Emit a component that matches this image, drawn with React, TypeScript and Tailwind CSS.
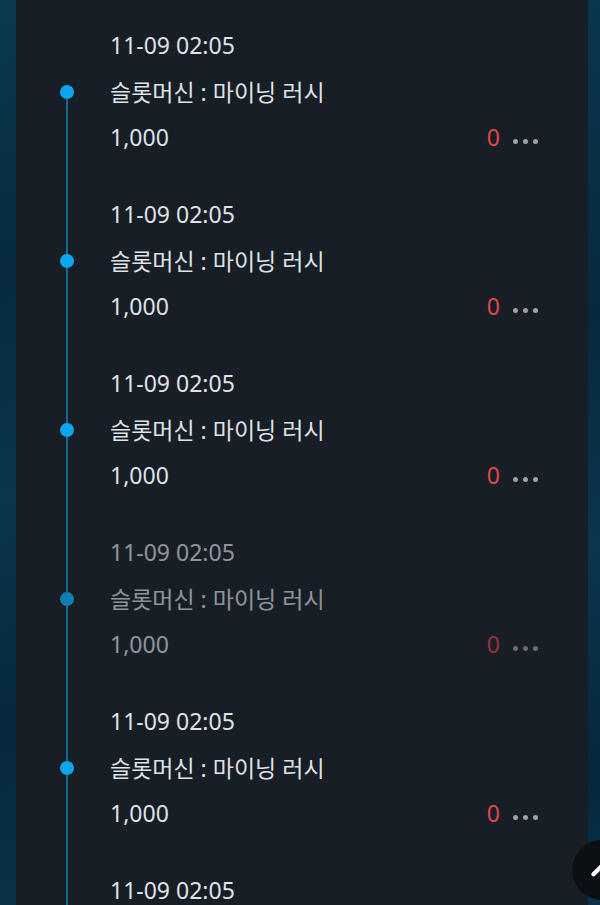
import { ChevronUp } from "lucide-react";

type Entry = {
  time: string;
  title: string;
  amount: string;
  result: string;
  dim?: boolean;
};

const entries: Entry[] = [
  { time: "11-09 02:05", title: "슬롯머신 : 마이닝 러시", amount: "1,000", result: "0" },
  { time: "11-09 02:05", title: "슬롯머신 : 마이닝 러시", amount: "1,000", result: "0" },
  { time: "11-09 02:05", title: "슬롯머신 : 마이닝 러시", amount: "1,000", result: "0" },
  { time: "11-09 02:05", title: "슬롯머신 : 마이닝 러시", amount: "1,000", result: "0", dim: true },
  { time: "11-09 02:05", title: "슬롯머신 : 마이닝 러시", amount: "1,000", result: "0" },
  { time: "11-09 02:05", title: "슬롯머신 : 마이닝 러시", amount: "1,000", result: "0" },
];

function TimelineRow({ entry, first }: { entry: Entry; first: boolean }) {
  return (
    <div className="flex h-[169px] shrink-0">
      {/* rail */}
      <div className="w-[94px] shrink-0 pl-[44px]">
        <div className="flex h-full w-[14px] flex-col items-center">
          <div className={`h-[63px] w-[2px] ${first ? "" : "bg-[#176a8f]"}`} />
          <div
            className={`h-[14px] w-[14px] shrink-0 rounded-full bg-[#0ba6ee] ${entry.dim ? "opacity-70" : ""}`}
          />
          <div className="w-[2px] flex-1 bg-[#176a8f]" />
        </div>
      </div>

      {/* content */}
      <div className={`flex flex-1 flex-col pr-[50px] ${entry.dim ? "opacity-60" : ""}`}>
        <div className="flex h-[47px] items-center">{entry.time}</div>
        <div className="flex h-[46px] items-center">{entry.title}</div>
        <div className="flex h-[45px] items-center justify-between">
          <span>{entry.amount}</span>
          <div className="flex items-center">
            <span className="text-[#e0464b]">{entry.result}</span>
            <div className="ml-[13px] mt-[8px] flex gap-[5px]">
              <span className="h-[5px] w-[5px] rounded-full bg-[#9ea2a7]" />
              <span className="h-[5px] w-[5px] rounded-full bg-[#9ea2a7]" />
              <span className="h-[5px] w-[5px] rounded-full bg-[#9ea2a7]" />
            </div>
          </div>
        </div>
      </div>
    </div>
  );
}

export default function App() {
  return (
    <div
      className="relative flex h-[905px] w-[600px] overflow-hidden bg-gradient-to-b from-[#08344a] via-[#062a3d] to-[#083247]"
      style={{ fontFamily: '"Noto Sans", "Noto Sans CJK KR", sans-serif' }}
    >
      <div className="w-[16px] shrink-0 bg-[linear-gradient(160deg,#0a3a52_0%,#062b3f_30%,#0a3650_55%,#05293c_80%,#093348_100%)]" />

      <div className="flex flex-1 flex-col bg-[#181e25] pt-[22px] text-[23px] text-[#dfe2e6]">
        {entries.map((e, i) => (
          <TimelineRow key={i} entry={e} first={i === 0} />
        ))}
      </div>

      <div className="w-[12px] shrink-0 bg-[linear-gradient(160deg,#093750_0%,#062a3d_35%,#0a3650_60%,#05283b_85%,#093348_100%)]" />

      {/* scroll to top */}
      <button
        type="button"
        className="absolute left-[572px] top-[840px] flex h-[60px] w-[60px] items-center justify-center rounded-full bg-[#0c1015]"
      >
        <ChevronUp size={34} strokeWidth={3} className="text-white" />
      </button>
    </div>
  );
}
